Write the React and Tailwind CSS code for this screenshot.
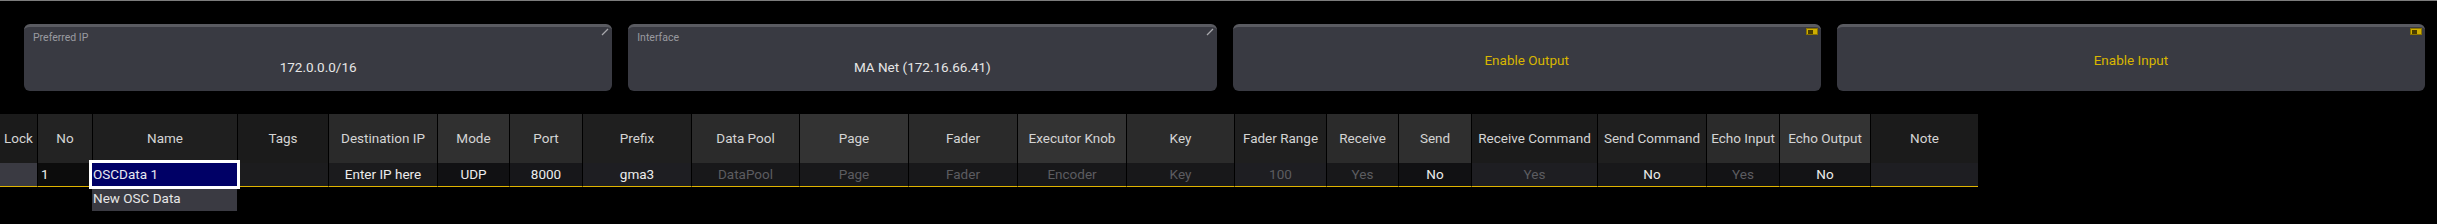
import React from "react";

// Spalten: Breite, Kopf-Farbe, Zellen-Farbe, Inhalt, Stil
const columns = [
  { name: "Lock", w: 37, head: "#1b1b1b", cell: "#3a3a42", value: "", dim: false },
  { name: "No", w: 55, head: "#232323", cell: "#0c0c0c", value: "1", dim: false, left: true },
  { name: "Name", w: 145, head: "#1f1f1f", cell: "#000066", value: "OSCData 1", selected: true },
  { name: "Tags", w: 91, head: "#1b1b1b", cell: "#1c1c1e", value: "" },
  { name: "Destination IP", w: 109, head: "#2a2a2a", cell: "#1b1b1d", value: "Enter IP here" },
  { name: "Mode", w: 72, head: "#303030", cell: "#111113", value: "UDP" },
  { name: "Port", w: 73, head: "#2a2a2a", cell: "#17171a", value: "8000" },
  { name: "Prefix", w: 109, head: "#1f1f1f", cell: "#1e1e22", value: "gma3" },
  { name: "Data Pool", w: 108, head: "#2b2b2b", cell: "#18181a", value: "DataPool", dim: true },
  { name: "Page", w: 109, head: "#333333", cell: "#18181a", value: "Page", dim: true },
  { name: "Fader", w: 109, head: "#2a2a2a", cell: "#18181a", value: "Fader", dim: true },
  { name: "Executor Knob", w: 109, head: "#333333", cell: "#18181a", value: "Encoder", dim: true },
  { name: "Key", w: 108, head: "#2b2b2b", cell: "#18181a", value: "Key", dim: true },
  { name: "Fader Range", w: 92, head: "#1f1f1f", cell: "#1e1e22", value: "100", dim: true },
  { name: "Receive", w: 72, head: "#2b2b2b", cell: "#18181a", value: "Yes", dim: true },
  { name: "Send", w: 73, head: "#2f2f2f", cell: "#111113", value: "No" },
  { name: "Receive Command", w: 126, head: "#1b1b1b", cell: "#1e1e22", value: "Yes", dim: true },
  { name: "Send Command", w: 109, head: "#1f1f1f", cell: "#18181a", value: "No" },
  { name: "Echo Input", w: 73, head: "#2b2b2b", cell: "#131315", value: "Yes", dim: true },
  { name: "Echo Output", w: 91, head: "#333333", cell: "#131315", value: "No" },
  { name: "Note", w: 108, head: "#1b1b1b", cell: "#1e1e22", value: "" },
];

function EditMark() {
  return (
    <svg className="absolute right-[3px] top-[1px]" width="8" height="8" viewBox="0 0 8 8">
      <line x1="1" y1="7" x2="7" y2="1" stroke="#a8a8ac" strokeWidth="1.2" />
    </svg>
  );
}

function ToggleMark() {
  return (
    <div className="absolute right-[3px] top-[1px] w-[12px] h-[7px] bg-[#cfae00] border border-[#8a7300] flex items-center pl-px">
      <div className="w-[5px] h-[4px] bg-[#4a3d00]" />
    </div>
  );
}

function FieldBox({ label, value }) {
  return (
    <div className="relative flex-1 h-[67px] bg-[#393a42] rounded-[6px] border-t-[3px] border-[#5a5b61] flex flex-col">
      <EditMark />
      <div className="pl-[9px] pt-[4px] h-[18px] leading-[14px] text-[10.5px] text-[#9a9aa0]">{label}</div>
      <div className="flex-1 flex items-center justify-center pb-[2px] text-[13.5px] text-[#e6e6e6]">{value}</div>
    </div>
  );
}

function ToggleBox({ label }) {
  return (
    <div className="relative flex-1 h-[67px] bg-[#393a42] rounded-[6px] border-t-[3px] border-[#5a5b61] flex items-center justify-center pt-[3px]">
      <ToggleMark />
      <span className="text-[13.5px] text-[#d8b600]">{label}</span>
    </div>
  );
}

export default function App() {
  return (
    <div
      className="w-[2437px] h-[224px] bg-black overflow-hidden border-t border-[#7c7c7c]"
      style={{ fontFamily: "Roboto, 'Noto Sans', sans-serif" }}
    >
      {/* obere Felder */}
      <div className="flex gap-[16px] pl-[24px] pr-[12px] pt-[23px]">
        <FieldBox label="Preferred IP" value="172.0.0.0/16" />
        <FieldBox label="Interface" value="MA Net (172.16.66.41)" />
        <ToggleBox label="Enable Output" />
        <ToggleBox label="Enable Input" />
      </div>

      {/* Tabelle */}
      <div className="mt-[23px] flex w-[1978px]">
        {columns.map((c, i) => (
          <div key={c.name} className="flex flex-col shrink-0" style={{ width: c.w }}>
            <div
              className={
                "h-[49px] flex items-center justify-center text-[13.5px] text-[#d4d4d4] whitespace-nowrap " +
                (i > 0 ? "border-l border-black" : "")
              }
              style={{ backgroundColor: c.head }}
            >
              {c.name}
            </div>
            <div
              className={
                "relative h-[24px] border-b border-[#e0b400] flex items-center text-[13.5px] whitespace-nowrap " +
                (c.left ? "justify-start pl-[3px] " : "justify-center ") +
                (c.dim ? "text-[#5c5c60] " : "text-[#ececec] ") +
                (i > 0 && !c.selected ? "border-l border-l-black" : "")
              }
              style={{ backgroundColor: c.cell }}
            >
              {c.selected ? (
                <>
                  <div className="absolute top-full left-0 w-full h-[25px] bg-[#3a3a42] z-10 flex items-center pl-px text-[13.5px] text-[#e6e6e6]">
                    New OSC Data
                  </div>
                  <div className="absolute -inset-[3px] border-[3px] border-white bg-[#000066] z-20 flex items-center pl-px text-[13.5px] text-[#e8e8f0]">
                    OSCData 1
                  </div>
                </>
              ) : (
                c.value
              )}
            </div>
          </div>
        ))}
      </div>
    </div>
  );
}
